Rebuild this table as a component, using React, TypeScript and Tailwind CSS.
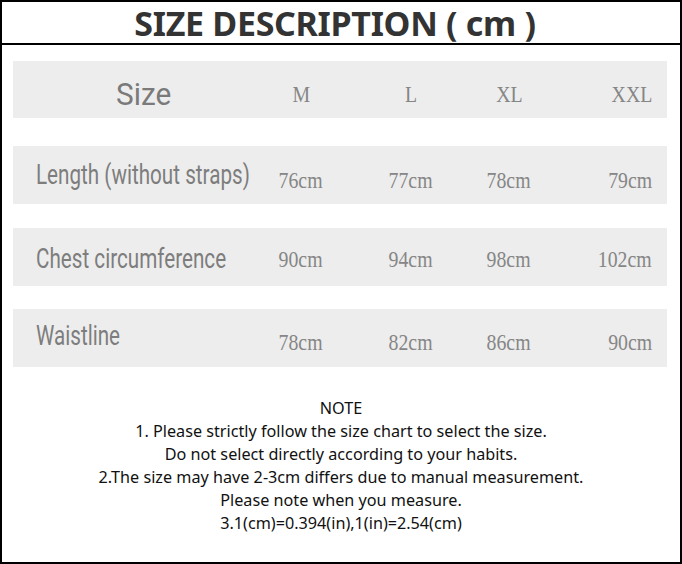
const rows = [
  {
    label: "Length (without straps)",
    values: ["76cm", "77cm", "78cm", "79cm"],
    band: "mt-[28px]",
    labelPad: "pt-[16px]",
    valuePad: "pt-[23px]",
  },
  {
    label: "Chest circumference",
    values: ["90cm", "94cm", "98cm", "102cm"],
    band: "mt-[24px]",
    labelPad: "pt-[18px]",
    valuePad: "pt-[20px]",
  },
  {
    label: "Waistline",
    values: ["78cm", "82cm", "86cm", "90cm"],
    band: "mt-[23px]",
    labelPad: "pt-[14px]",
    valuePad: "pt-[22px]",
  },
]

const labelFont = { fontFamily: "Roboto, 'Liberation Sans', sans-serif" }
const valueFont = { fontFamily: "'Liberation Serif', serif" }

function ValueCells({ values, pad }: { values: string[]; pad: string }) {
  const cls = "inline-block scale-x-[0.86] text-[23px] leading-none text-[#868686]"
  return (
    <>
      <div className={`w-[98px] text-center ${pad}`}>
        <span className={`${cls} origin-center`} style={valueFont}>{values[0]}</span>
      </div>
      <div className={`w-[122px] text-center ${pad}`}>
        <span className={`${cls} origin-center`} style={valueFont}>{values[1]}</span>
      </div>
      <div className={`w-[74px] text-center ${pad}`}>
        <span className={`${cls} origin-center`} style={valueFont}>{values[2]}</span>
      </div>
      <div className={`flex-1 pr-[15px] text-right ${pad}`}>
        <span className={`${cls} origin-right`} style={valueFont}>{values[3]}</span>
      </div>
    </>
  )
}

export default function App() {
  return (
    <div className="flex h-[564px] w-[682px] flex-col border-2 border-black bg-white">
      <div className="flex h-[43px] shrink-0 items-center justify-center border-b-2 border-black pr-[12px]">
        <h1
          className="text-[34px] font-bold leading-none tracking-[-0.3px] text-[#333333]"
          style={{ fontFamily: "'Noto Sans', 'Open Sans', sans-serif" }}
        >
          SIZE DESCRIPTION ( cm )
        </h1>
      </div>

      <div className="ml-[11px] mr-[13px] mt-[16px] flex h-[57px] bg-[#ededed]">
        <div className="w-[239px] pl-[23px] pt-[17px] text-center">
          <span className="inline-block origin-center scale-x-[0.93] text-[32px] leading-none text-[#7a7a7a]" style={labelFont}>
            Size
          </span>
        </div>
        <ValueCells values={["M", "L", "XL", "XXL"]} pad="pt-[22px]" />
      </div>

      {rows.map((row) => (
        <div key={row.label} className={`ml-[11px] mr-[13px] flex h-[58px] bg-[#ededed] ${row.band}`}>
          <div className={`w-[239px] whitespace-nowrap pl-[23px] ${row.labelPad}`}>
            <span className="inline-block origin-left scale-x-[0.765] text-[27px] leading-none text-[#7d7d7d]" style={labelFont}>
              {row.label}
            </span>
          </div>
          <ValueCells values={row.values} pad={row.valuePad} />
        </div>
      ))}

      <div
        className="mt-[30px] text-center text-[16.2px] leading-[23px] text-[#111111]"
        style={{ fontFamily: "'Noto Sans', 'Open Sans', sans-serif" }}
      >
        <p>NOTE</p>
        <p>1. Please strictly follow the size chart to select the size.</p>
        <p>Do not select directly according to your habits.</p>
        <p>2.The size may have 2-3cm differs due to manual measurement.</p>
        <p>Please note when you measure.</p>
        <p>3.1(cm)=0.394(in),1(in)=2.54(cm)</p>
      </div>
    </div>
  )
}
